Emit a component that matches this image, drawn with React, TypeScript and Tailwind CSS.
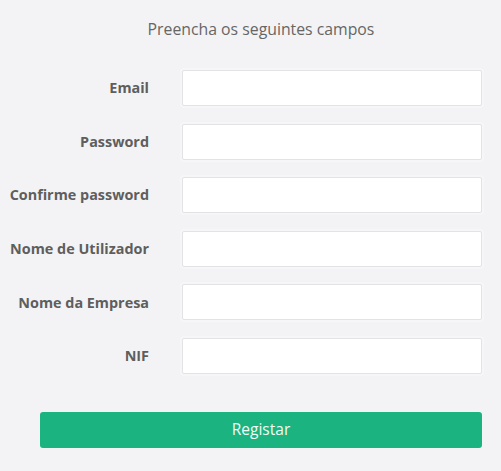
const fields = [
  { label: 'Email', type: 'email' },
  { label: 'Password', type: 'password' },
  { label: 'Confirme password', type: 'password' },
  { label: 'Nome de Utilizador', type: 'text' },
  { label: 'Nome da Empresa', type: 'text' },
  { label: 'NIF', type: 'text' },
];

export default function App() {
  return (
    <div className="min-h-[471px] w-[501px] bg-[#f3f3f5] pt-[19px] font-['Open_Sans',sans-serif]">
      <h2 className="ml-[40px] w-[442px] text-center text-[15.8px] leading-[20px] text-[#666]">
        Preencha os seguintes campos
      </h2>

      <form className="mt-[31px]">
        {fields.map(f => (
          <div key={f.label} className="mb-[17.6px] flex items-center">
            <label className="w-[149px] text-right text-[14.4px] font-bold text-[#5e5e5e]">
              {f.label}
            </label>
            <input
              type={f.type}
              className="ml-[33px] h-[36px] w-[300px] rounded-[2px] border border-[#e3e3e6] bg-white px-3 text-sm shadow-[0_0_0_2px_#f6f6f8] focus:outline-none"
            />
          </div>
        ))}

        <button
          type="button"
          className="ml-[40px] mt-[20.4px] h-[36px] w-[442px] rounded-[3px] bg-[#1bb37f] text-[15.5px] text-[#f0fbf6]"
        >
          Registar
        </button>
      </form>
    </div>
  );
}
